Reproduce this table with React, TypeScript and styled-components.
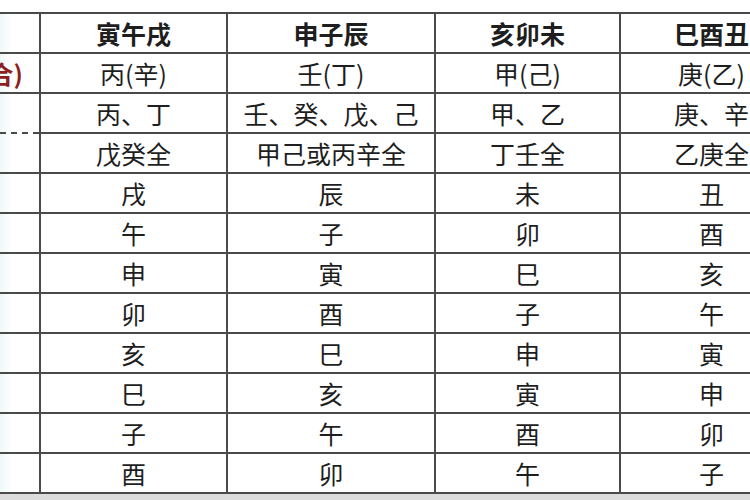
import React from 'react';
import styled, { createGlobalStyle } from 'styled-components';

const GlobalStyle = createGlobalStyle`
  html, body {
    margin: 0;
    padding: 0;
    background: #ffffff;
  }
  body {
    font-family: "Noto Sans CJK SC", "Noto Sans", sans-serif;
  }
`;

interface RowProps {
  side?: string;
  cells: string[];
  dashed?: boolean;
}

const headers = ['寅午戌', '申子辰', '亥卯未', '巳酉丑'];

const rows: RowProps[] = [
  { side: '(暗合)', cells: ['丙(辛)', '壬(丁)', '甲(己)', '庚(乙)'] },
  { cells: ['丙、丁', '壬、癸、戊、己', '甲、乙', '庚、辛'], dashed: true },
  { cells: ['戊癸全', '甲己或丙辛全', '丁壬全', '乙庚全'] },
  { cells: ['戌', '辰', '未', '丑'] },
  { cells: ['午', '子', '卯', '酉'] },
  { cells: ['申', '寅', '巳', '亥'] },
  { cells: ['卯', '酉', '子', '午'] },
  { cells: ['亥', '巳', '申', '寅'] },
  { cells: ['巳', '亥', '寅', '申'] },
  { cells: ['子', '午', '酉', '卯'] },
  { cells: ['酉', '卯', '午', '子'] },
];

const colWidths = [40, 187, 208, 185, 183];

export default function App() {
  return (
    <>
      <GlobalStyle />
      <Page>
        <TableWrap>
          <Table>
            <colgroup>
              {colWidths.map((w, i) => (
                <col key={i} style={{ width: w }} />
              ))}
            </colgroup>
            <thead>
              <tr>
                <SideCell />
                {headers.map((h) => (
                  <HeadCell key={h}>{h}</HeadCell>
                ))}
              </tr>
            </thead>
            <tbody>
              {rows.map((row, i) => (
                <tr key={i}>
                  <SideCell
                    dashedBottom={row.dashed}
                    dashedTop={i > 0 && rows[i - 1].dashed}
                  >
                    {row.side && <SideNote>{row.side}</SideNote>}
                  </SideCell>
                  {row.cells.map((c, j) => (
                    <Cell key={j}>{c}</Cell>
                  ))}
                </tr>
              ))}
            </tbody>
          </Table>
        </TableWrap>
        <Shade />
      </Page>
    </>
  );
}

const Page = styled.div`
  width: 750px;
  height: 500px;
  overflow: hidden;
  display: flex;
  flex-direction: column;
  background: #ffffff;
`;

const TableWrap = styled.div`
  padding-top: 12px;
  width: 750px;
  overflow: hidden;
`;

const Table = styled.table`
  border-collapse: collapse;
  table-layout: fixed;
  width: 803px;
  color: #1e1e1e;
  font-size: 25px;
  line-height: 1;

  tr {
    height: 40px;
  }
`;

const Cell = styled.td`
  border: 2px solid #4a4a4a;
  text-align: center;
  vertical-align: middle;
  padding: 0;
  white-space: nowrap;
  overflow: hidden;
`;

const HeadCell = styled.th`
  border: 2px solid #4a4a4a;
  text-align: center;
  vertical-align: middle;
  padding: 0;
  font-weight: 700;
  white-space: nowrap;
  overflow: hidden;
`;

const SideCell = styled.td<{ dashedBottom?: boolean; dashedTop?: boolean }>`
  border: 2px solid #4a4a4a;
  border-left: none;
  border-bottom-style: ${(p) => (p.dashedBottom ? 'dashed' : 'solid')};
  border-top-style: ${(p) => (p.dashedTop ? 'dashed' : 'solid')};
  padding: 0 16px 0 0;
  text-align: right;
  vertical-align: middle;
  white-space: nowrap;
  overflow: hidden;
  direction: rtl;
  background: linear-gradient(90deg, #eef8f8 0, #ffffff 12px);
`;

const SideNote = styled.span`
  direction: ltr;
  unicode-bidi: isolate;
  color: #8e1e22;
  font-weight: 700;
`;

const Shade = styled.div`
  flex: 1;
  background: #dcdcdc;
`;
